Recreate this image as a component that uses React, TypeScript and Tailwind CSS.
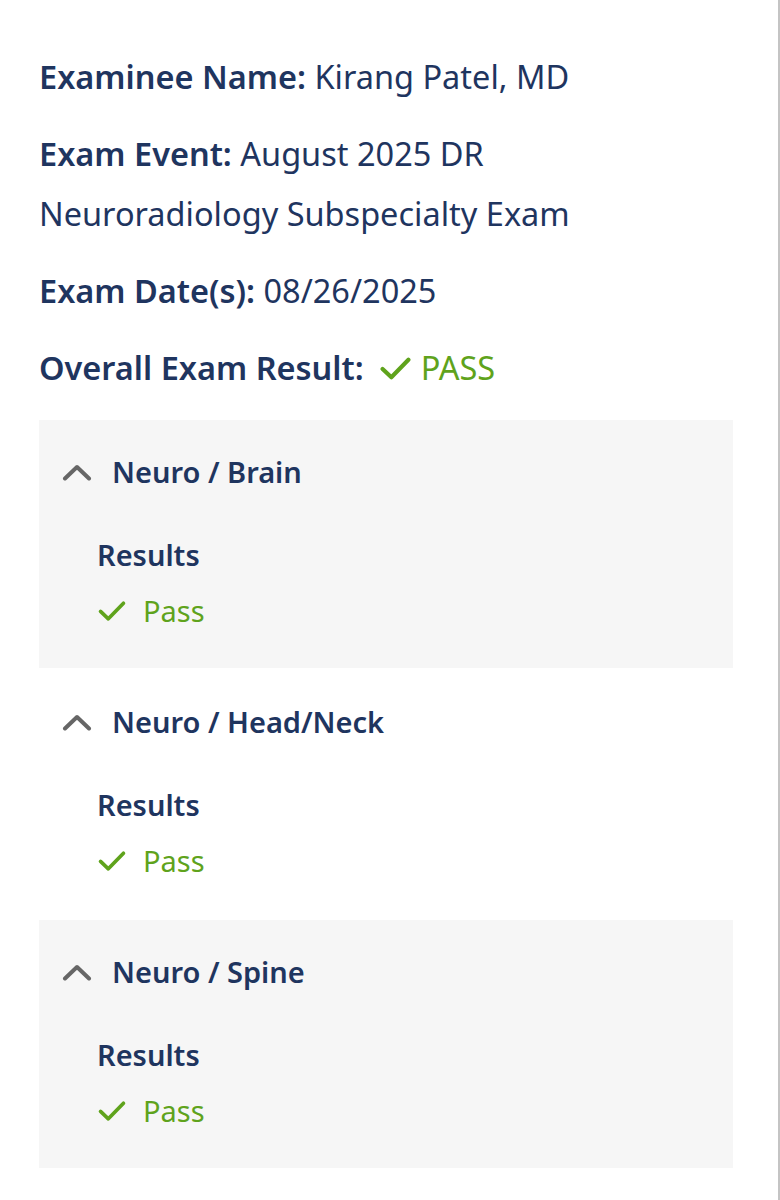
import React from 'react';

const sections = [
  { name: 'Neuro / Brain', result: 'Pass', shaded: true },
  { name: 'Neuro / Head/Neck', result: 'Pass', shaded: false },
  { name: 'Neuro / Spine', result: 'Pass', shaded: true },
];

function CheckIcon({ className }: { className?: string }) {
  return (
    <svg viewBox="0 0 30 24" className={className} fill="none">
      <polyline
        points="2.5,12.5 11,20.5 27.5,3.5"
        stroke="currentColor"
        strokeWidth="4"
        strokeLinecap="round"
        strokeLinejoin="round"
      />
    </svg>
  );
}

function ChevronUp() {
  return (
    <svg viewBox="0 0 30 18" className="h-[18px] w-[30px] text-[#666666]" fill="none">
      <polyline
        points="3,15.5 15,4 27,15.5"
        stroke="currentColor"
        strokeWidth="4"
        strokeLinecap="round"
        strokeLinejoin="round"
      />
    </svg>
  );
}

export default function App() {
  return (
    <div
      className="min-h-[1200px] w-[780px] border-r-2 border-[#c4c4c4] bg-white pl-[39px] pr-[45px] pt-[47px] text-[#1f355f]"
      style={{ fontFamily: '"Noto Sans", "Open Sans", sans-serif' }}
    >
      <p className="mb-[17px] text-[32.5px] leading-[60px]">
        <span className="font-semibold">Examinee Name:</span> Kirang Patel, MD
      </p>
      <p className="mb-[17px] text-[32.5px] leading-[60px]">
        <span className="font-semibold">Exam Event:</span> August 2025 DR
        <br />
        Neuroradiology Subspecialty Exam
      </p>
      <p className="mb-[17px] text-[32.5px] leading-[60px]">
        <span className="font-semibold">Exam Date(s):</span> 08/26/2025
      </p>
      <p className="mb-[22px] flex items-center text-[32.5px] leading-[60px]">
        <span className="font-semibold">Overall Exam Result:</span>
        <span className="ml-[16px] flex items-center gap-[10px] text-[#5fa31c]">
          <CheckIcon className="h-[25px] w-[31px]" />
          PASS
        </span>
      </p>

      {sections.map((s) => (
        <div
          key={s.name}
          className={`mb-[2px] h-[248px] pt-[32px] ${s.shaded ? 'bg-[#f6f6f6]' : 'bg-white'}`}
        >
          <div className="flex h-[40px] items-center pl-[23px]">
            <ChevronUp />
            <span className="ml-[20px] text-[29px] font-semibold">{s.name}</span>
          </div>
          <div className="pl-[58px] pt-[43px]">
            <div className="h-[40px] text-[29px] font-semibold leading-[40px]">Results</div>
            <div className="mt-[16px] flex h-[40px] items-center gap-[16px] text-[29px] text-[#5fa31c]">
              <CheckIcon className="h-[22px] w-[30px]" />
              <span>{s.result}</span>
            </div>
          </div>
        </div>
      ))}
    </div>
  );
}
